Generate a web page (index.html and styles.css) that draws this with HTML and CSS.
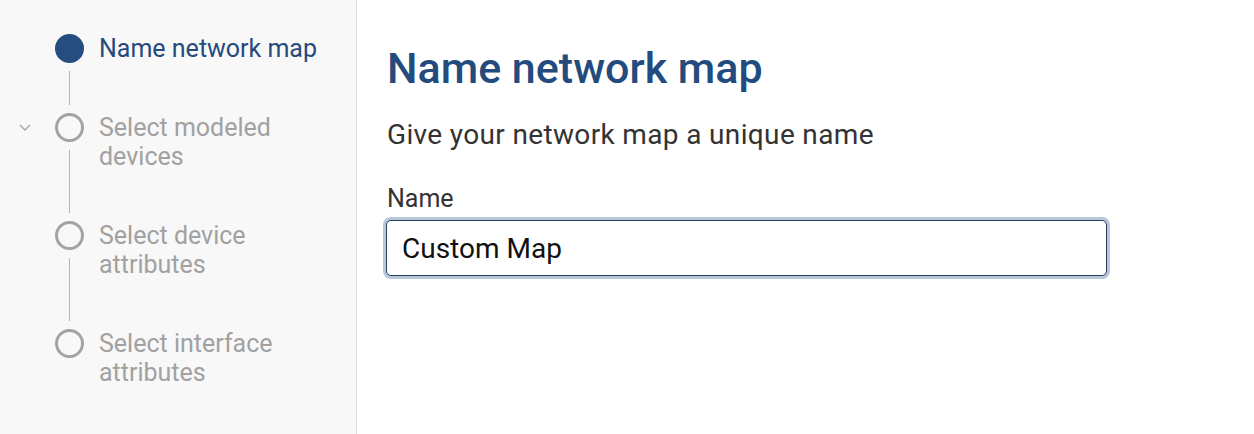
FILE: index.html
```html
<!DOCTYPE html>
<html lang="en">
<head>
<meta charset="utf-8">
<title>Name network map</title>
<link rel="stylesheet" href="styles.css">
</head>
<body>
<div class="layout">
  <nav class="sidebar">
    <ol class="steps">
      <li class="step step-active">
        <span class="chev"></span>
        <span class="indicator"><span class="dot"></span><span class="connector"></span></span>
        <span class="label">Name network map</span>
      </li>
      <li class="step">
        <span class="chev">
          <svg width="12" height="7" viewBox="0 0 12 7"><path d="M1 1l5 5 5-5" fill="none" stroke="#a6a6a6" stroke-width="1.4"/></svg>
        </span>
        <span class="indicator"><span class="dot"></span><span class="connector"></span></span>
        <span class="label">Select modeled devices</span>
      </li>
      <li class="step">
        <span class="chev"></span>
        <span class="indicator"><span class="dot"></span><span class="connector"></span></span>
        <span class="label">Select device attributes</span>
      </li>
      <li class="step step-last">
        <span class="chev"></span>
        <span class="indicator"><span class="dot"></span></span>
        <span class="label">Select interface attributes</span>
      </li>
    </ol>
  </nav>
  <main class="content">
    <h1 class="title">Name network map</h1>
    <p class="subtitle">Give your network map a unique name</p>
    <label class="field-label" for="map-name">Name</label>
    <input class="field-input" id="map-name" type="text" value="Custom Map">
  </main>
</div>
</body>
</html>
```
FILE: styles.css
```css
* { box-sizing: border-box; }
html, body { margin: 0; padding: 0; }
body {
  font-family: Roboto, "Liberation Sans", Arial, sans-serif;
  background: #ffffff;
  width: 1254px;
  height: 434px;
  overflow: hidden;
}
.layout {
  display: flex;
  height: 434px;
}
.sidebar {
  width: 357px;
  flex: none;
  background: #f8f8f8;
  border-right: 1px solid #dedede;
  padding: 34px 20px 0 19px;
}
.steps {
  list-style: none;
  margin: 0;
  padding: 0;
}
.step {
  display: flex;
  align-items: stretch;
  padding-bottom: 50px;
}
.step-last { padding-bottom: 0; }
.chev {
  width: 12px;
  flex: none;
  height: 29px;
  display: flex;
  align-items: center;
  justify-content: center;
  margin-right: 24px;
}
.chev svg { display: block; }
.indicator {
  width: 29px;
  flex: none;
  display: flex;
  flex-direction: column;
  align-items: center;
  margin-right: 15px;
}
.dot {
  width: 29px;
  height: 29px;
  border-radius: 50%;
  border: 3px solid #a3a3a3;
  flex: none;
}
.step-active .dot {
  background: #264d80;
  border-color: #264d80;
}
.connector {
  flex: 1;
  width: 1px;
  background: #b4b4b4;
  margin: 8px 0 -42px;
}
.label {
  flex: 1;
  font-size: 25px;
  line-height: 29px;
  color: #a1a1a1;
}
.step-active .label { color: #254a7c; }
.content {
  flex: 1;
  padding: 40px 0 0 30px;
}
.title {
  margin: 0;
  font-size: 43px;
  font-weight: 500;
  line-height: 56px;
  color: #244b7e;
}
.subtitle {
  margin: 22px 0 0;
  font-size: 28px;
  letter-spacing: 0.35px;
  line-height: 34px;
  color: #333333;
}
.field-label {
  display: block;
  margin-top: 32px;
  font-size: 25px;
  line-height: 30px;
  color: #333333;
}
.field-input {
  display: block;
  margin: 6px 0 0 -1px;
  width: 721px;
  height: 56px;
  padding: 0 15px;
  border: 1px solid #2a3f58;
  border-radius: 5px;
  box-shadow: 0 0 0 3px #b7c7db;
  font-family: Roboto, "Liberation Sans", Arial, sans-serif;
  font-size: 28px;
  color: #111111;
  background: #ffffff;
  outline: none;
}
```
